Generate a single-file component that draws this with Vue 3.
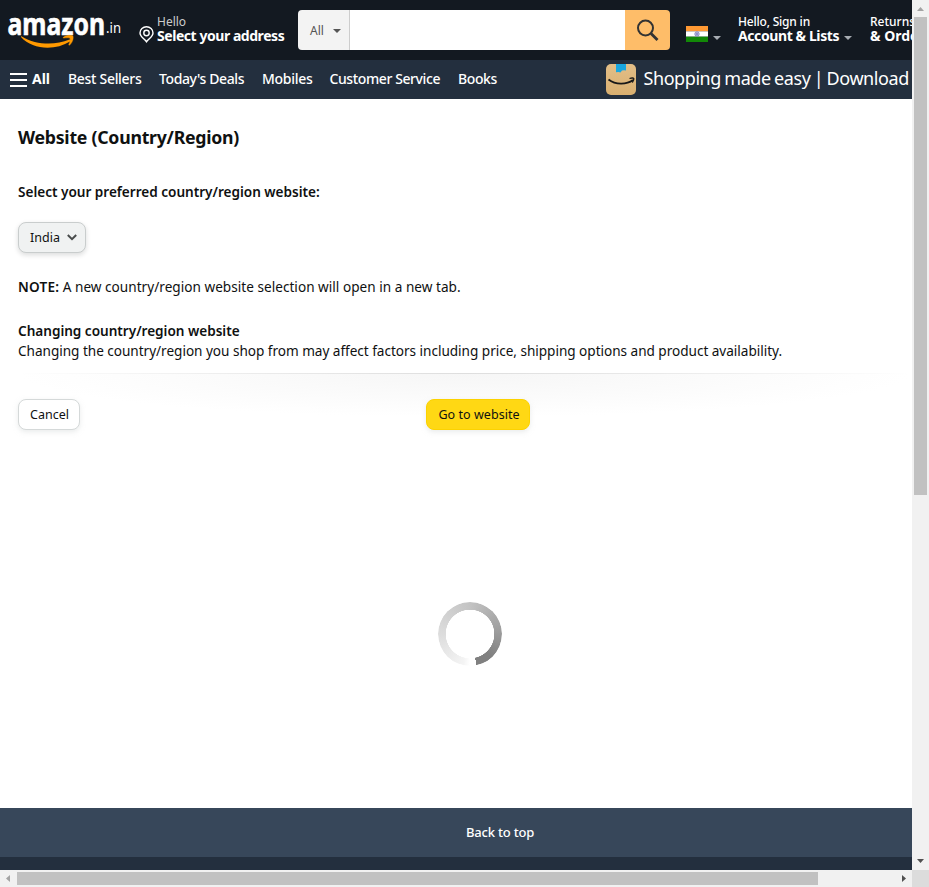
<script setup>
const links = [
  { label: 'Best Sellers', width: 91, cls: 'l-best' },
  { label: "Today's Deals", width: 103, cls: 'l-today' },
  { label: 'Mobiles', width: 67.5, cls: 'l-mobiles' },
  { label: 'Customer Service', width: 128.5, cls: 'l-service' },
  { label: 'Books', width: 148, cls: 'l-books' },
]
</script>

<template>
  <div class="window">
    <div class="page">
      <header class="top">
        <svg class="logo" width="115" height="34" viewBox="0 0 115 34">
          <text class="logo-word" x="-.5" y="21.200" textLength="97.500" lengthAdjust="spacingAndGlyphs">amazon</text>
          <text class="logo-tld" x="98" y="19" textLength="15" lengthAdjust="spacingAndGlyphs">.in</text>
          <path d="M13.800 22.400C28 30.800 46 31.800 61.500 25.600c1.500-.6 2.300.7 1 1.600C46 37.500 24 35 13.200 23.200c-.5-.6 0-1.100.6-.8Z" fill="#ff9900" />
          <path d="M55.300 23.300c3.200-2.500 9-2.400 9.600-1.300.8 1.200.1 6.200-3.200 9-.6.5-1.200.2-.9-.5.9-2 1.900-5.300 1.200-6.100-.8-.9-4.200-.5-6-.3-.9.100-1.100-.4-.7-.8Z" fill="#ff9900" stroke="#ff9900" stroke-width=".4" />
        </svg>
        <div class="address">
          <svg class="pin" width="15" height="17" viewBox="0 0 15 17" fill="none" stroke="#fff" stroke-width="1.400">
            <path d="M7.500 15.800C5.400 13 1 10.400 1 7a6.500 6.300 0 0 1 13 0c0 3.400-4.400 6-6.500 8.800Z" />
            <circle cx="7.500" cy="7" r="2.700" />
          </svg>
          <div class="two">
            <span class="small muted">Hello</span>
            <span class="strong t-address">Select your address</span>
          </div>
        </div>
        <div class="search">
          <div class="scope"><span>All</span><i class="caret dark"></i></div>
          <div class="field"></div>
          <div class="go">
            <svg width="24" height="24" viewBox="0 0 24 24" fill="none" stroke="#333" stroke-width="2">
              <circle cx="9.500" cy="10" r="7.500" />
              <path d="M15 15.500l6.500 6.500" stroke-width="2.800" />
            </svg>
          </div>
        </div>
        <div class="lang">
          <svg width="22" height="16" viewBox="0 0 22 16">
            <path d="M0 0h22v5.300H0z" fill="#ff9933" />
            <path d="M0 5.300h22v5.400H0z" fill="#fff" />
            <path d="M0 10.700h22V16H0z" fill="#128807" />
            <circle cx="11" cy="8" r="2.200" fill="#c9c9e6" stroke="#6666b3" stroke-width=".7" />
            <circle cx="11" cy="8" r=".7" fill="#333399" />
          </svg>
          <i class="caret"></i>
        </div>
        <div class="two account">
          <span class="small t-hello">Hello, Sign in</span>
          <span class="strong t-account">Account &amp; Lists</span>
          <i class="caret"></i>
        </div>
        <div class="two">
          <span class="small t-returns">Returns</span>
          <span class="strong t-orders">&amp; Orders</span>
        </div>
      </header>

      <nav class="bar">
        <svg width="17" height="14" viewBox="0 0 17 14"><path d="M0 1h17M0 7h17M0 13h17" stroke="#fff" stroke-width="2" /></svg>
        <b class="all">All</b>
        <a v-for="l in links" :key="l.label" :class="l.cls" :style="{ width: l.width + 'px' }">{{ l.label }}</a>
        <svg class="app" width="30" height="31" viewBox="0 0 30 31">
          <defs>
            <linearGradient id="box" x1="0" y1="0" x2="0" y2="1">
              <stop offset="0" stop-color="#e3bf88" /><stop offset="1" stop-color="#d9af70" />
            </linearGradient>
          </defs>
          <rect width="30" height="31" rx="5" fill="url(#box)" />
          <path d="M10 0h10v6.500l-2-.3-2 .3-1.500 2-2-.5-2.500.3z" fill="#1aa7e0" />
          <path d="M2.500 15.500c7 5.400 18 5.400 24.500.5" fill="none" stroke="#181818" stroke-width="1.900" />
          <path d="M23.500 14.500c2-.8 4-.5 4.300 0 .2 1-.5 2.800-1.500 4" fill="none" stroke="#181818" stroke-width="1.300" />
        </svg>
        <span class="promo">Shopping made easy | Download</span>
      </nav>

      <main class="content">
        <h1>Website (Country/Region)</h1>
        <h2 class="t-select">Select your preferred country/region website:</h2>
        <button class="btn picker">
          <span>India</span>
          <svg width="10" height="7" viewBox="0 0 10 7" fill="none" stroke="#494c4c" stroke-width="2"><path d="M.8 1 5 5.200 9.200 1" /></svg>
        </button>
        <p class="note"><b>NOTE:</b> A new country/region website selection will open in a new tab.</p>
        <h2 class="t-changing">Changing country/region website</h2>
        <p class="info">Changing the country/region you shop from may affect factors including price, shipping options and product availability.</p>
        <section class="actions">
          <button class="btn cancel">Cancel</button>
          <button class="btn primary">Go to website</button>
        </section>
        <div class="spinner"></div>
      </main>

      <footer>
        <div class="back"><span>Back to top</span></div>
        <div class="deep"></div>
      </footer>
    </div>

    <div class="vbar">
      <svg width="17" height="17" viewBox="0 0 17 17"><path d="M5 11h7L8.500 7z" fill="#a3a3a3" /></svg>
      <div class="vthumb"></div>
      <svg class="end" width="17" height="17" viewBox="0 0 17 17"><path d="M5 6h7l-3.500 4z" fill="#505050" /></svg>
    </div>
    <div class="hbar">
      <svg width="17" height="17" viewBox="0 0 17 17"><path d="M10 5v7L6 8.500z" fill="#a3a3a3" /></svg>
      <div class="hthumb"></div>
      <svg class="end" width="17" height="17" viewBox="0 0 17 17"><path d="M7 5v7l4-3.500z" fill="#505050" /></svg>
    </div>
    <div class="corner"></div>
  </div>
</template>

<style>
body { margin: 0; background: #fff; overflow: hidden; }
</style>

<style scoped>
.window {
  width: 929px; height: 887px; display: grid;
  grid-template: 870px 17px / 912px 17px;
  font-family: "Noto Sans", "Open Sans", sans-serif; font-size: 13px; color: #0f1111;
  overflow: hidden; white-space: nowrap;
}
.window * { box-sizing: border-box; }
svg { display: block; flex: none; }
.page { overflow: hidden; display: flex; flex-direction: column; background: #fff; }
.top { height: 60px; flex: none; background: #131921; color: #fff; display: flex; align-items: flex-start; padding: 0 0 0 8px; }
.logo { margin-top: 14px; overflow: visible; }
.logo-word { font-size: 29.500px; font-weight: 700; fill: #fff; stroke: #fff; stroke-width: .6px; }
.logo-tld { font-size: 14.500px; fill: #fff; }
.address { display: flex; width: 159px; margin-left: 16px; flex: none; }
.pin { margin-top: 26px; }
.two { display: flex; flex-direction: column; padding-top: 15px; margin-left: 3px; flex: none; }
.small { font-size: 12px; line-height: 14px; font-weight: 500; }
.t-hello { letter-spacing: -.2px; }
.muted { color: #ccc; font-weight: 400; }
.strong { font-size: 14px; line-height: 15px; font-weight: 700; margin-top: -1px; }
.t-address { letter-spacing: -.45px; }
.search { width: 372px; height: 40px; margin-top: 10px; border-radius: 4px; overflow: hidden; display: flex; flex: none; }
.scope { width: 52px; background: #f3f3f3; border-right: 1px solid #cdcdcd; color: #555; font-size: 12px; display: flex; align-items: center; padding: 1px 8px 0 12px; justify-content: space-between; }
.field { flex: 1; background: #fff; }
.go { width: 45px; background: #febd69; display: flex; align-items: center; justify-content: center; }
.caret { width: 0; height: 0; border: 4px solid transparent; border-top-color: #a7acb2; border-bottom: 0; }
.caret.dark { border-top-color: #555; }
.lang { display: flex; margin: 26px 0 0 16px; width: 49px; gap: 5px; flex: none; }
.lang .caret { margin-top: 10px; }
.account { width: 129px; position: relative; }
.account .caret { position: absolute; left: 106px; top: 36px; }
.t-account { letter-spacing: -.4px; }
.bar { height: 39px; flex: none; background: #232f3e; color: #fff; display: flex; align-items: center; padding-left: 10px; font-size: 14px; font-weight: 500; }
.all { width: 41px; padding-left: 5px; flex: none; font-weight: 700; }
.bar a, .all { padding-bottom: 2px; }
.bar a { flex: none; letter-spacing: -.3px; }
.bar .l-service, .bar .l-books, .bar .l-today { letter-spacing: -.4px; }
.app { margin: 0 8px 0 -.5px; }
.promo { font-size: 18px; font-weight: 400; letter-spacing: -.43px; word-spacing: -.9px; padding-bottom: 3px; }
.content { height: 709px; flex: none; padding: 26px 0 0 18px; display: flex; flex-direction: column; align-items: flex-start; }
h1 { margin: 0; font-size: 17.700px; line-height: 24px; font-weight: 700; letter-spacing: -.25px; }
h2 { margin: 0; font-size: 13.600px; line-height: 20px; font-weight: 600; letter-spacing: -.02px; }
p { margin: 0; font-size: 13.600px; line-height: 20px; }
.info { letter-spacing: -.03px; }
.t-select { margin-top: 33px; }
.btn { height: 31px; border-radius: 8px; font: 400 12.500px "Noto Sans", sans-serif; color: #0f1111; padding: 0 0 0 1px; display: flex; align-items: center; justify-content: center; border: 1px solid #d5d9d9; background: #fff; box-shadow: 0 2px 5px rgba(213,217,217,.5); }
.picker { width: 68px; margin-top: 20px; padding-left: 3px; background: #f0f2f2; border-color: #c9cdcd; box-shadow: 0 2px 5px rgba(15,17,17,.15); gap: 7px; }
.note { margin-top: 24px; letter-spacing: .02px; }
.note b { font-weight: 600; letter-spacing: .2px; }
.t-changing { margin-top: 24px; }
.actions {
  width: 894px; height: 57px; margin-top: 12px; padding-top: 26px; display: flex; flex: none;
  background:
    linear-gradient(90deg, transparent, #dedede 50%, transparent) top / 100% 1px no-repeat,
    radial-gradient(ellipse 50% 44px at 50% 0, #f6f6f6, #fff);
}
.cancel { width: 62px; }
.primary { width: 104px; margin-left: 346px; padding-left: 2px; background: #ffd814; border-color: #fcd200; letter-spacing: .05px; }
.spinner {
  width: 64px; height: 64px; margin: 172px 0 0 420px; border-radius: 50%;
  background: conic-gradient(from 168deg, #fff 0 12deg, #f4f4f4 25deg, #ddd 100deg, #c4c4c4 190deg, #a0a0a0 270deg, #808080 330deg 360deg);
  -webkit-mask: radial-gradient(circle, transparent 24px, #000 24.500px);
  mask: radial-gradient(circle, transparent 24px, #000 24.500px);
}
.back { height: 49px; background: #37475a; color: #fff; font-weight: 500; display: flex; align-items: center; padding: 0 0 2px 466px; letter-spacing: -.2px; }
.deep { height: 13px; background: #232f3e; }
.vbar { background: #f1f1f1; display: flex; flex-direction: column; }
.vthumb { width: 13px; height: 478px; margin-left: 2px; background: #c1c1c1; }
.vbar .end { margin-top: auto; }
.hbar { background: #f1f1f1; display: flex; align-items: center; }
.hthumb { width: 801px; height: 13px; background: #c1c1c1; }
.hbar .end { margin-left: auto; }
.corner { background: #dcdcdc; }
</style>
